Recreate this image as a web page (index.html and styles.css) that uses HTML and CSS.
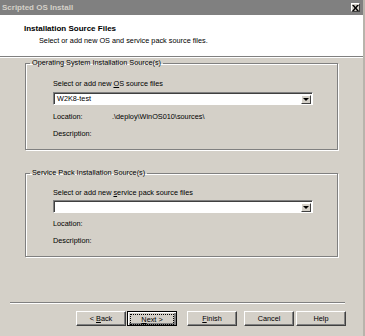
FILE: index.html
```html
<!DOCTYPE html>
<html lang="en">
<head>
    <meta charset="UTF-8">
    <meta name="viewport" content="width=device-width, initial-scale=1.0">
    <title>Scripted OS Install</title>
    <link rel="stylesheet" href="styles.css">
</head>
<body>
    <div class="window">
        <div class="titlebar">
            <span class="title">Scripted OS Install</span>
            <span class="close">
                <svg width="7" height="6" viewBox="0 0 7 6"><path d="M0 0h2l1.5 2L5 0h2L4.5 3 7 6H5L3.5 4 2 6H0l2.5-3z" fill="#000"/></svg>
            </span>
        </div>
        <div class="header">
            <div class="heading">Installation Source Files</div>
            <div class="subheading">Select or add new OS and service pack source files.</div>
        </div>
        <div class="content">
            <fieldset class="group">
                <legend>Operating System Installation Source(s)</legend>
                <div class="group-body">
                    <div class="label">Select or add new <u>O</u>S source files</div>
                    <div class="combo">
                        <span class="combo-text">W2K8-test</span>
                        <span class="combo-btn"><span class="arrow"></span></span>
                    </div>
                    <div class="row loc"><span class="key">Location:</span><span>.\deploy\WinOS010\sources\</span></div>
                    <div class="row desc"><span class="key">Description:</span></div>
                </div>
            </fieldset>
            <fieldset class="group group-sp">
                <legend>Service Pack Installation Source(s)</legend>
                <div class="group-body">
                    <div class="label">Select or add new <u>s</u>ervice pack source files</div>
                    <div class="combo">
                        <span class="combo-text"></span>
                        <span class="combo-btn"><span class="arrow"></span></span>
                    </div>
                    <div class="row loc"><span class="key">Location:</span></div>
                    <div class="row desc"><span class="key">Description:</span></div>
                </div>
            </fieldset>
        </div>
        <div class="footer">
            <div class="separator"></div>
            <div class="buttons">
                <button class="btn">&lt; <u>B</u>ack</button>
                <button class="btn default"><span class="focus"><u>N</u>ext &gt;</span></button>
                <button class="btn gap"><u>F</u>inish</button>
                <button class="btn">Cancel</button>
                <button class="btn">Help</button>
            </div>
        </div>
    </div>
</body>
</html>
```

FILE: styles.css
```css
body {
    margin: 0;
    padding: 0;
    font-family: "Liberation Sans", Arial, sans-serif;
    font-size: 7.3px;
    line-height: 10px;
    color: #000;
    background-color: #d4d0c8;
}
.window {
    width: 365px;
    height: 336px;
    box-sizing: border-box;
    display: flex;
    flex-direction: column;
    background-color: #d4d0c8;
    border-right: 2px solid #b8b4ac;
}
.titlebar {
    height: 15px;
    background-color: #808080;
    color: #d4d0c8;
    font-weight: bold;
    font-size: 8px;
    display: flex;
    align-items: center;
    justify-content: space-between;
    padding: 0 2px 0 2px;
}
.close {
    width: 9px;
    height: 9px;
    box-sizing: border-box;
    background-color: #d4d0c8;
    border: 1px solid;
    border-color: #fff #404040 #404040 #fff;
    display: flex;
    align-items: center;
    justify-content: center;
    margin-right: 1px;
}
.header {
    height: 42px;
    background-color: #fff;
    border-bottom: 1px solid #808080;
    box-shadow: 0 1px 0 #fff;
    padding: 9px 0 0 24px;
    box-sizing: border-box;
}
.heading {
    font-weight: bold;
    font-size: 8px;
}
.subheading {
    margin-top: 2px;
    padding-left: 15px;
}
.content {
    padding: 1px 0 0 25px;
}
.group {
    width: 313px;
    box-sizing: border-box;
    margin: 0;
    padding: 0 0 10px 0;
    border: 1px solid #808080;
    box-shadow: 1px 1px 0 #fff, inset 1px 1px 0 #fff;
}
.group legend {
    padding: 0 2px;
    margin-left: 4px;
}
.group-body {
    padding: 11px 0 0 27px;
}
.group-sp {
    margin-top: 18px;
}
.group-sp .group-body {
    padding-top: 10px;
}
.label {
    height: 10px;
}
.combo {
    width: 260px;
    height: 13px;
    box-sizing: border-box;
    margin-top: 3px;
    background-color: #fff;
    border: 1px solid;
    border-color: #808080 #fff #fff #808080;
    box-shadow: inset 1px 1px 0 #404040;
    display: flex;
    align-items: center;
    justify-content: space-between;
    padding: 1px 1px 0 3px;
}
.group-sp .combo {
    margin-top: 2px;
}
.combo-btn {
    width: 10px;
    height: 9px;
    box-sizing: border-box;
    background-color: #d4d0c8;
    border: 1px solid;
    border-color: #fff #404040 #404040 #fff;
    display: flex;
    align-items: center;
    justify-content: center;
}
.arrow {
    width: 0;
    height: 0;
    border-left: 3px solid transparent;
    border-right: 3px solid transparent;
    border-top: 3px solid #000;
}
.row {
    display: flex;
    height: 10px;
}
.loc {
    margin-top: 7px;
}
.group-sp .loc {
    margin-top: 6px;
}
.desc {
    margin-top: 7px;
}
.key {
    width: 59px;
}
.footer {
    margin-top: auto;
    padding-bottom: 10px;
}
.separator {
    margin: 0 18px 0 10px;
    border-top: 1px solid #808080;
    border-bottom: 1px solid #fff;
}
.buttons {
    display: flex;
    padding: 7px 0 0 76px;
}
.btn {
    width: 50px;
    height: 15px;
    margin-right: 1px;
    padding: 0;
    font-family: "Liberation Sans", Arial, sans-serif;
    font-size: 7.3px;
    color: #000;
    background-color: #d4d0c8;
    border: 1px solid;
    border-color: #fff #404040 #404040 #fff;
    box-shadow: inset -1px -1px 0 #808080;
}
.btn.default {
    border: 1px solid #000;
    box-shadow: inset 1px 1px 0 #fff, inset -2px -2px 0 #808080;
    padding: 2px;
    margin-right: 10px;
}
.btn.default .focus {
    display: block;
    height: 9px;
    line-height: 9px;
    border: 1px dotted #000;
}
.btn.gap {
    margin-right: 7px;
}
.btn:last-child {
    margin-left: 1px;
}
```
